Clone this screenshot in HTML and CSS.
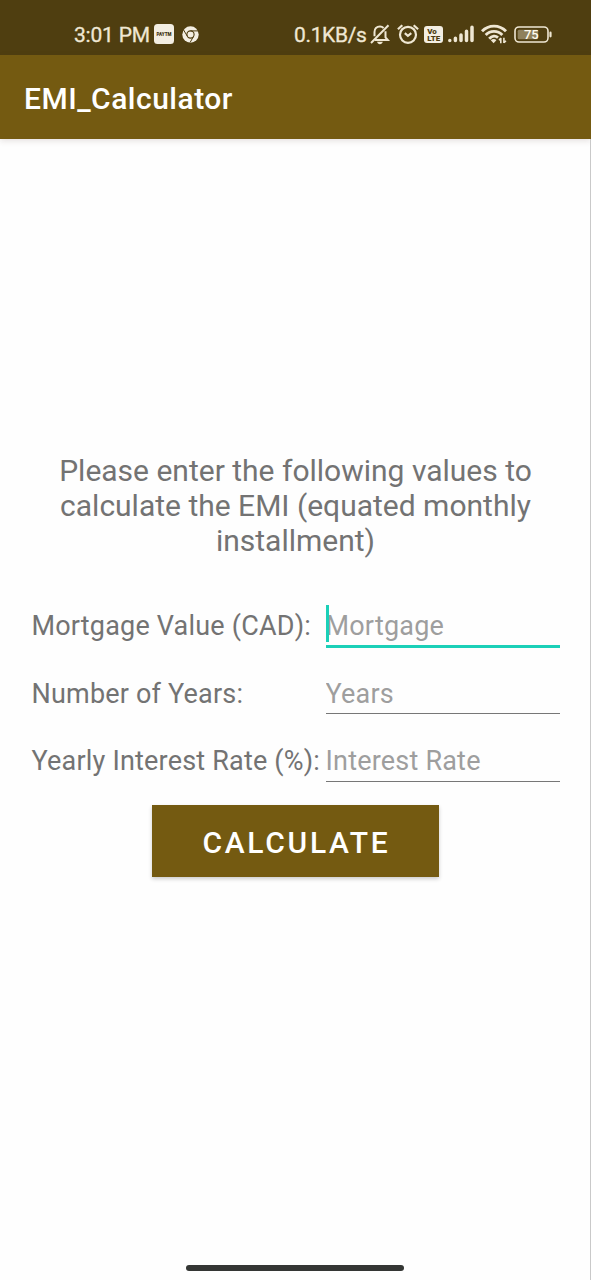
FILE: index.html
```html
<!DOCTYPE html>
<html lang="en">
<head>
<meta charset="utf-8">
<title>EMI_Calculator</title>
<link rel="stylesheet" href="styles.css">
</head>
<body>
<div class="screen">
  <header class="status">
    <span class="clock">3:01 PM</span>
    <svg class="ic paytm" width="20" height="20" viewBox="0 0 20 20"><rect width="20" height="20" rx="3.5" fill="#f3eee2"/><text x="10" y="12.2" text-anchor="middle" textLength="15" lengthAdjust="spacingAndGlyphs" class="paytm-text">PAYTM</text></svg>
    <svg class="ic chrome" width="17" height="17" viewBox="0 0 17 17"><circle cx="8.5" cy="8.5" r="8.2" fill="#f3eee2"/><circle cx="8.5" cy="8.5" r="3.6" fill="none" stroke="#4d3c10" stroke-width="1.1"/><path d="M8.5 4.9H16M5.4 10.3 1.6 4M11.6 10.3 8 16.6" stroke="#4d3c10" stroke-width="1" fill="none"/></svg>
    <span class="speed">0.1KB/s</span>
    <svg class="ic bell" width="20" height="21" viewBox="0 0 20 21" fill="none" stroke="#efe7d3" stroke-width="2"><path d="M13.6 4C12.6 3 11.5 2.4 10 2.4 6.6 2.4 4.5 4.9 4.5 8v4.2M5 16H17.8L15.5 13.4V7.2M1 19 18.5 1.2"/><path d="M7 17.8h5.8c-.4 1.6-1.4 2.5-2.9 2.5s-2.5-.9-2.9-2.5z" fill="#efe7d3" stroke="none"/></svg>
    <svg class="ic alarm" width="22" height="20" viewBox="0 0 22 20" fill="none" stroke="#efe7d3" stroke-width="2.2"><circle cx="11" cy="10.8" r="8"/><path d="M.9 5.3 5.3 1.2M21.1 5.3 16.7 1.2M7.8 9.2l3.1 2.6 3.4-2.7"/></svg>
    <svg class="ic volte" width="19" height="17" viewBox="0 0 19 17"><rect width="19" height="17" rx="3" fill="#f3eee2"/><text x="3.2" y="7.6" class="volte-text">Vo</text><text x="3.2" y="14.8" textLength="13" lengthAdjust="spacingAndGlyphs" class="volte-text">LTE</text></svg>
    <svg class="ic signal" width="26" height="18" viewBox="0 0 26 18" stroke="#efe7d3" stroke-width="3.5" stroke-linecap="round"><path d="M1.8 15.5V15.6M7.4 13.2V15.6M13 10V15.6M18.5 6.2V15.6M24 2.2V15.6"/></svg>
    <svg class="ic wifi" width="26" height="20" viewBox="0 0 26 20" fill="none" stroke="#efe7d3" stroke-width="2.9"><path d="M1 7.2C7.7.4 18.3.4 25 7.2M4.7 11C9.3 6.2 16.7 6.2 21.3 11M8.2 14.7C11 11.7 14.5 11.5 17 13.6"/><path d="M9.8 16.2c1.7-1.7 4.2-1.7 5.6 0L12.6 19.3z" fill="#efe7d3" stroke="none"/><path d="M19.8 14v5.2M18 16.2l1.9-2.1M22.9 13.8v5.2M24.9 16.7 23 18.8" stroke-width="1.6"/></svg>
    <svg class="ic battery" width="38" height="17" viewBox="0 0 38 17"><rect x="1" y="1" width="33" height="15" rx="4" fill="none" stroke="#efe7d3" stroke-width="1.6"/><rect x="3.7" y="3.7" width="20.5" height="9.6" rx="1.5" fill="#8f815c"/><path d="M36.5 6.7v3.6" stroke="#efe7d3" stroke-width="2.2" stroke-linecap="round"/><text x="17.3" y="13" text-anchor="middle" class="battery-text">75</text></svg>
  </header>
  <div class="appbar"><h1 class="title">EMI_Calculator</h1></div>
  <main class="content">
    <p class="intro">Please enter the following values to<br>calculate the EMI (equated monthly<br>installment)</p>
    <form class="form">
      <label class="label" for="mortgage">Mortgage Value (CAD):</label>
      <div class="field focused"><input class="input" id="mortgage" placeholder="Mortgage"></div>
      <label class="label" for="years">Number of Years:</label>
      <div class="field"><input class="input" id="years" placeholder="Years"></div>
      <label class="label last" for="rate">Yearly Interest Rate (%):</label>
      <div class="field"><input class="input last" id="rate" placeholder="Interest Rate"></div>
    </form>
    <button class="button" type="button">CALCULATE</button>
  </main>
  <div class="home"></div>
</div>
</body>
</html>
```
FILE: styles.css
```css
* { box-sizing: border-box; }
body { margin: 0; background: #fff; font-family: Roboto, sans-serif; }
.screen { position: relative; width: 591px; height: 1280px; display: flex; flex-direction: column; overflow: hidden; background: #fefefe; }
.screen::after { content: ""; position: absolute; top: 139px; right: 0; bottom: 0; width: 1px; background: #c9c9c9; }
.status { height: 55px; flex: none; display: flex; align-items: flex-start; padding-left: 74px; background: #4f3e10; color: #efe7d3; font-size: 21px; line-height: 24px; white-space: nowrap; }
.clock { width: 80px; margin-top: 23px; letter-spacing: -0.2px; -webkit-text-stroke: 0.3px; }
.speed { width: 76px; margin: 23px 0 0 95px; letter-spacing: -0.35px; -webkit-text-stroke: 0.3px; }
.ic { flex: none; display: block; overflow: visible; }
.paytm { margin-top: 24px; }
.chrome { margin: 26px 0 0 8px; }
.bell { margin-top: 24px; }
.alarm { margin: 24px 0 0 7px; }
.volte { margin: 26px 0 0 5px; }
.signal { margin: 25px 0 0 5px; }
.wifi { margin: 24px 0 0 7px; }
.battery { margin: 26px 0 0 7px; }
.paytm-text { font: 900 6px Roboto, sans-serif; fill: #3d300d; }
.volte-text { font: 900 8px Roboto, sans-serif; fill: #4d3c10; }
.battery-text { font: 500 13px Roboto, sans-serif; fill: #fffbed; }
.appbar { height: 84px; flex: none; display: flex; align-items: center; padding: 4px 24px 0; background: #745a11; box-shadow: 0 2px 6px rgba(80, 50, 40, .14); }
.title { margin: 0; font-size: 30px; font-weight: 500; line-height: 36px; letter-spacing: 0.5px; color: #fff; }
.content { display: flex; flex-direction: column; align-items: center; padding-top: 314px; }
.intro { margin: 0; font-size: 30px; line-height: 35px; text-align: center; color: #737373; white-space: nowrap; }
.form { width: 528px; margin-top: 33px; display: grid; grid-template-columns: 294px 234px; grid-auto-rows: 68px; align-items: start; }
.label { padding: 19px 0 0; font-size: 27px; line-height: 32px; letter-spacing: 0.19px; color: #737373; white-space: nowrap; }
.field { position: relative; height: 55px; border-bottom: 1px solid #777; }
.field.focused { height: 57px; border-bottom: 3px solid #1bd0b8; }
.field.focused::before { content: ""; position: absolute; left: 0; top: 14px; width: 3px; height: 37px; background: #1bd0b8; }
.input { display: block; width: 100%; height: 32px; margin-top: 19px; padding: 0; border: 0; outline: 0; background: none; font: 27px/32px Roboto, sans-serif; letter-spacing: 0.2px; color: #222; }
.label.last { padding-top: 18px; }
.input.last { margin-top: 18px; }
.input::placeholder { color: #9e9e9e; opacity: 1; }
.button { width: 287px; height: 72px; margin-top: 10px; padding: 3px 0 0 2px; border: 0; background: #745a11; box-shadow: 0 2px 4px rgba(0, 0, 0, .2); font: 500 30px/36px Roboto, sans-serif; letter-spacing: 2.7px; color: #fff; }
.home { position: absolute; left: 186px; bottom: 9px; width: 218px; height: 6px; border-radius: 3px; background: #343634; }
```
